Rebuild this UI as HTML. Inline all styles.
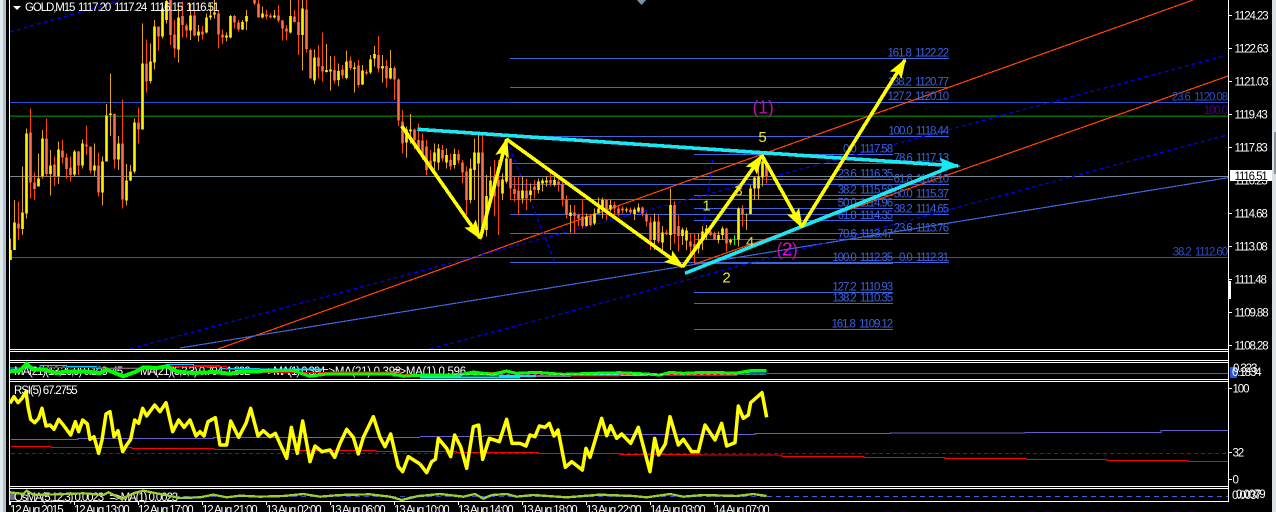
<!DOCTYPE html>
<html><head><meta charset="utf-8"><style>
html,body{margin:0;padding:0;background:#000;width:1276px;height:512px;overflow:hidden}
svg{display:block}
text{font-family:"Liberation Sans",sans-serif;font-size:11.5px;letter-spacing:-1.1px;fill:#fff;white-space:pre}
.f{fill:#3a60dc;text-anchor:end}
.g{fill:#2a4cc8;text-anchor:end}
.e{font-size:15px;letter-spacing:0;fill:#ecec40;text-anchor:middle}
</style></head><body>
<svg width="1276" height="512" viewBox="0 0 1276 512" xmlns="http://www.w3.org/2000/svg">
<defs>
<path id="yw" d="M31 715V780M43 600V750M67 500V705M79 385V655M115 460V560M127 390V535M151 450V587M175 425V552M223 450V530M247 418V505M283 430V530M307 470V617M319 312V485M331 220V408M355 408V510M379 492V617M391 495V543M403 355V520M427 70V388M451 130V250M463 60V208M487 10V115M499 0V70M535 10V188M571 10V120M595 75V125M619 40V100M631 10V60M643 0V55M679 98V125M691 45V115M727 60V90M739 30V90M787 20V55M823 30V55M871 0V100M907 0V212M943 148V252M979 132V218M991 168V272M1015 190V258M1039 152V238M1063 188V278M1087 195V255M1111 165V222M1123 138V200M1147 165V248M1171 150V238M1219 380V472M1231 342V430"/>
<path id="yb" d="M31 750V780M43 668V750M67 637V687M79 400V640M115 535V560M127 415V528M151 497V522M175 448V528M223 454V524M247 430V497M283 496V512M307 484V578M319 346V484M331 340V345M355 430V478M379 541V602M391 515V541M403 367V515M427 190V388M451 184V243M463 79V188M487 25V110M499 3V60M535 52V148M571 46V92M595 94V107M619 52V97M631 46V52M643 38V44M679 106V112M691 48V112M727 66V88M739 48V64M787 40V52M823 46V52M871 48V98M907 25V105M943 172V242M979 210V216M991 208V214M1015 213V240M1039 184V234M1063 202V207M1087 212V254M1111 178V218M1123 162V176M1147 198V206M1171 204V236M1219 388V428M1231 388V395"/>
<path id="ow" d="M55 605V720M91 325V595M103 517V600M139 355V530M163 470V558M187 420V490M199 460V535M211 470V545M235 453V525M259 376V465M271 440V520M295 457V590M343 340V505M367 298V625M415 322V430M439 118V278M475 85V152M511 0V135M523 60V172M547 5V112M559 70V112M583 30V110M607 78V118M655 30V145M667 88V132M703 45V85M715 60V95M775 0V53M763 0V15M799 30V58M811 40V55M835 15V68M847 60V122M859 75V122M883 30V68M895 0V165M919 0V158M931 145V235M955 135V235M967 98V245M1003 168V250M1027 195V235M1051 170V210M1075 180V262M1099 208V225M1135 108V218M1159 180V262M1183 200V300M1195 235V378M1207 330V460M1243 385V448M1255 370V455"/>
<path id="ob" d="M55 670V685M91 397V548M103 547V567M139 415V522M163 493V528M187 452V473M199 472V507M211 502V525M235 454V497M259 433V440M271 440V512M295 497V578M343 342V478M367 430V598M415 367V388M439 190V245M475 80V110M511 0V105M523 103V145M547 48V75M559 76V92M583 46V107M607 94V103M655 40V103M667 103V112M703 48V68M715 68V88M775 10V52M763 0V10M799 43V49M811 46V52M835 46V62M847 62V86M859 85V95M883 50V66M895 66V105M919 28V147M931 150V235M955 172V200M967 198V215M1003 210V242M1027 208V227M1051 182V204M1075 197V255M1099 216V220M1135 165V206M1159 198V236M1183 204V238M1195 238V362M1207 364V430M1243 388V420M1255 420V445"/>
<path id="yw2" d="M103 70V148M115 72V150M139 85V145M163 85V145M211 115V250M223 55V240M235 45V350M259 165V350M271 140V260M307 160V240M319 80V190M367 170V250M391 190V245M415 175V220M427 175V215M439 170V200M463 170V200M511 255V338M559 280V320M583 265V315M595 232V280M607 232V295M631 240V275M679 262V278M703 262V300M715 250V278M763 280V390M787 318V395M811 205V390M847 322V375M859 322V390M895 340V400M907 318V390M919 315V360M955 335V370M967 320V360M991 355V375M1015 262V380M1039 280V330M1051 195V280M1063 170V240M1075 140V238M1087 105V200"/>
<path id="yb2" d="M103 98V125M115 85V128M139 105V128M163 102V135M211 145V240M223 98V150M235 98V130M259 228V330M271 182V228M307 178V220M319 115V185M367 212V235M391 212V225M415 185V210M427 182V190M439 182V188M463 180V195M511 278V288M559 290V318M583 280V310M595 265V280M607 240V265M631 255V268M679 268V272M703 268V282M715 262V275M763 304V360M787 338V368M811 255V345M847 328V348M859 332V362M895 372V385M907 335V362M919 325V340M955 345V360M967 325V345M991 360V368M1015 265V358M1039 283V285M1051 205V282M1063 172V205M1075 170V205M1087 125V172"/>
<path id="ow2" d="M67 40V120M79 60V165M91 90V150M127 75V125M151 100V150M175 90V130M187 120V190M199 140V285M247 45V350M283 120V290M295 120V345M331 115V240M343 170V245M355 170V285M379 175V270M403 180V235M451 158V200M475 175V215M487 180V260M499 225V295M523 255V340M535 280V320M547 238V325M571 280V320M619 238V300M643 245V285M655 255V290M667 260V280M691 262V282M727 260V290M739 278V320M751 290V390M775 285V370M799 330V345M823 245V370M835 285V395M871 340V400M883 340V430M931 325V350M943 335V360M979 322V395M1027 255V320M1099 125V190"/>
<path id="ob2" d="M67 62V100M79 80V150M91 122V145M127 90V115M151 120V140M175 102V122M187 128V158M199 155V240M247 98V340M283 170V230M295 180V200M331 115V205M343 207V222M355 212V240M379 212V235M403 200V210M451 180V190M475 185V195M487 192V238M499 238V285M523 278V288M535 285V295M547 290V318M571 288V315M619 240V270M643 255V265M655 265V280M667 265V272M691 268V278M727 262V280M739 282V305M751 308V360M775 304V365M799 338V342M823 255V342M835 318V348M871 365V380M883 372V395M931 335V345M943 340V358M979 325V370M1027 265V285M1099 130V170"/>
<marker id="ay" markerWidth="22" markerHeight="16" refX="18" refY="8" orient="auto" markerUnits="userSpaceOnUse"><path d="M0 1L20 8L0 15L4 8Z" fill="#ffff00"/></marker>
<marker id="ac" markerWidth="24" markerHeight="16" refX="19" refY="8" orient="auto" markerUnits="userSpaceOnUse"><path d="M0 1L22 8L0 15L4 8Z" fill="#19e8f4"/></marker>
</defs>

<rect width="1276" height="512" fill="#000"/>
<rect x="0" y="0" width="3" height="512" fill="#dfe8ec"/>
<rect x="3" y="0" width="3" height="512" fill="#b4c0c8"/>
<rect x="1272" y="0" width="4" height="512" fill="#d8e0e4"/>
<rect x="1274" y="132" width="2" height="42" fill="#8a949a"/>
<path d="M637 0H646L641.5 5Z" fill="#7d93a8"/>

<g shape-rendering="crispEdges" fill="none">
<path d="M10 102.5H1228M10 257.5H1228" stroke="#2a4fd6"/>
<path d="M10 115.5H1228" stroke="#4b0082"/>
<path d="M10 116.5H1228" stroke="#006400"/>
<path d="M10 176.5H1228" stroke="#778899"/>
<path d="M510 58.5H949M510 87.5H949M510 102.5H949M510 136.5H949M510 163.5H949M510 184.5H949M510 199.5H949M510 214.5H949M510 233.5H949M510 262.5H949" stroke="#3d63dd"/>
<path d="M694 154.5H893M694 179.5H893M694 195.5H893M694 208.5H893M694 220.5H893M694 239.5H893M694 262.5H893M694 263.5H893M694 292.5H893M694 303.5H893M694 329.5H893" stroke="#3d63dd"/>
<path d="M218 349L1193 0M695 264L1228 76" stroke="#ff4500" stroke-width="1.2"/>
<path d="M180 348L1228 177.7" stroke="#3d63dd" stroke-width="1.2"/>
<path d="M10 32L120 1M130 349L1225 55.7M430 349L1227 135M506.7 140L555 263M701.7 240L713 157" stroke="#0000ff" stroke-width="1.2" stroke-dasharray="4 3"/>

<g transform="translate(.17 0) scale(.33333)">
<use href="#yw" stroke="#e0a818" stroke-width="3"/>
<use href="#ow" stroke="#ff4500" stroke-width="3"/>
<use href="#yb" stroke="#e8b818" stroke-width="9"/>
<use href="#yb" stroke="#fff000" stroke-width="3.2"/>
<use href="#ob" stroke="#ff4500" stroke-width="9"/>
<use href="#ob" stroke="#ff7048" stroke-width="3.2"/>
</g>
<g transform="translate(400.17 120) scale(.33333)">
<use href="#yw2" stroke="#e0a818" stroke-width="3"/>
<use href="#ow2" stroke="#ff4500" stroke-width="3"/>
<use href="#yb2" stroke="#e8b818" stroke-width="9"/>
<use href="#yb2" stroke="#fff000" stroke-width="3.2"/>
<use href="#ob2" stroke="#ff4500" stroke-width="9"/>
<use href="#ob2" stroke="#ff7048" stroke-width="3.2"/>
<path d="M1003 345V375" stroke="#22ee22" stroke-width="3"/>
</g>

<path d="M9 349.5H1229M9 351.5H1229M9 360.5H1229M9 362.5H1229M9 379.5H1229M9 381.5H1229M9 486.5H1229M9 488.5H1229M9 501.5H1229" stroke="#fff"/>
<path d="M9.5 0V505M1228.5 0V502" stroke="#fff"/>
<path d="M1229 15.5h3M1229 48.5h3M1229 81.5h3M1229 114.5h3M1229 147.5h3M1229 213.5h3M1229 246.5h3M1229 279.5h3M1229 312.5h3M1229 345.5h3M1229 388.5h3M1229 452.5h3M1229 479.5h3M10.5 502v3M74.5 502v3M138.5 502v3M202.5 502v3M266.5 502v3M330.5 502v3M394.5 502v3M458.5 502v3M522.5 502v3M586.5 502v3M650.5 502v3M714.5 502v3" stroke="#fff"/>
<rect x="1228" y="281" width="3" height="18" fill="#fff"/>
<path d="M767 373.5H1228" stroke="#3d63dd"/>
</g>

<text x="14" y="375">MA(21)(13,26,9) 0.103 -45</text>
<text x="140" y="375">MA(21)(5,3,3) 0.704  1.892</text>
<text x="262" y="375">=&gt;MA(1) 0.394</text>
<text x="322" y="375" style="letter-spacing:-.3px">=&gt;MA(21) 0.398</text>
<text x="393" y="375" style="letter-spacing:-.3px">=&gt;MA(1) 0.596</text>

<g shape-rendering="crispEdges" fill="none">
<g transform="translate(0 358) scale(.33333)">
<path d="M30 30H120V22H200V25H290V32H420V28H500V20H580V24H660V32H780" stroke="#00c8ff" stroke-width="3"/>
<path d="M120 28H300V30H500V25H680V35H780" stroke="#ff0000" stroke-width="3"/>
<polyline points="30,40 60,38 80,18 100,35 130,35 170,45 200,40 250,40 300,45 320,35 370,55 410,40 430,28 470,30 500,25 530,40 580,45 640,42 690,47 730,40 780,40" stroke="#00ff00" stroke-width="12"/>
</g>
<g transform="translate(260 358) scale(.33333)">
<path d="M0 34H180V46H400V52H600V58H780" stroke="#00e8ff" stroke-width="6"/>
<path d="M0 44H210V42H420V50H640V52H780" stroke="#ff0000" stroke-width="3"/>
<polyline points="0,40 60,38 100,38 150,55 200,48 400,48 430,55 470,52 500,55 600,50 640,42 700,50 740,40 780,48" stroke="#00ff00" stroke-width="9"/>
</g>
<g transform="translate(420 340) scale(.33333)">
<path d="M0 112H240V108H450V105H680V103H950V100H1040" stroke="#00e8ff" stroke-width="6"/>
<path d="M160 98H350V108H600V103H950V100H1040" stroke="#ff0000" stroke-width="3"/>
<polyline points="0,105 50,105 100,105 160,100 180,100 220,102 260,93 290,100 350,97 430,103 520,100 600,98 680,102 720,105 750,97 790,100 850,97 950,99 990,92 1040,92" stroke="#00ff00" stroke-width="9"/>
<path d="M100 103H1040" stroke="#e8e8e8" stroke-width="2" stroke-dasharray="10 10"/>
</g>
</g>

<g shape-rendering="crispEdges" fill="none">
<path d="M11 453.5H1226" stroke="#800080" stroke-dasharray="4 3"/>
<g transform="translate(0 340) scale(.33333)">
<path d="M33 298H234V295H640V292H1260" stroke="#6a5acd" stroke-width="3"/>
<path d="M33 319H153V322H396V325H642V328H885V331H1128V335H1260" stroke="#f00" stroke-width="3"/>
</g>
<g transform="translate(420 340) scale(.33333)">
<path d="M0 289H190V286H600V283H1005V281H1260" stroke="#6a5acd" stroke-width="3"/>
<path d="M0 335H110V338H355V340H600V343H843V345H1086V349H1260" stroke="#f00" stroke-width="3"/>
</g>
<path d="M840 433.5H890V433H1025V432.5H1161V430.5H1228" stroke="#6a5acd"/>
<path d="M840 456.5H864V457.5H945V458.5H1026V459.5H1107V460.5H1188V461.5H1228" stroke="#f00"/>
</g>
<g fill="none">
<g transform="translate(0 340) scale(.33333)">
<polyline stroke="#ffff00" stroke-width="10.5" stroke-linejoin="round" points="30,190 42,170 54,188 66,175 78,155 84,200 92,238 104,248 116,235 126,205 138,258 150,255 162,268 176,238 190,255 212,285 226,245 236,275 248,240 262,252 270,298 282,290 296,340 306,300 318,222 330,215 342,290 354,272 368,335 380,315 392,298 404,240 416,250 428,205 440,228 464,195 480,215 498,188 518,275 536,240 552,262 570,240 588,288 600,275 612,288 624,245 646,233 660,315 680,315 692,243 716,292 738,250 752,205 774,288 790,272 810,290 826,280 860,355 874,262 892,340 908,243 930,365 945,318 966,335 990,330 1004,352 1020,310 1040,268 1060,292 1075,342 1090,292 1120,230 1140,292 1155,320 1172,282 1195,380 1208,395 1225,350 1260,372"/>
</g>
<g transform="translate(420 340) scale(.33333)">
<polyline stroke="#ffff00" stroke-width="10.5" stroke-linejoin="round" points="0,372 20,398 35,365 46,358 55,295 80,325 92,350 104,285 122,320 140,385 160,260 176,255 188,358 208,295 238,305 260,238 276,310 300,310 318,318 330,285 345,290 358,258 375,262 388,250 402,288 414,270 436,382 455,365 487,390 498,325 510,352 545,235 560,287 572,257 590,295 605,282 632,310 655,262 690,395 704,295 716,345 736,312 750,230 775,315 790,298 815,335 835,335 855,255 885,300 905,250 920,318 945,308 955,198 970,235 985,225 992,188 1026,158 1040,232"/>
</g>
</g>

<rect x="10" y="492" width="5" height="8" fill="#667080"/>
<text x="14" y="501">OsMA(5,12,3) 0.0023   =&gt;MA(1) 0.0023</text>
<g shape-rendering="crispEdges" fill="none">
<path d="M767 496.5H1228" stroke="#3d63dd" stroke-dasharray="5 4"/>
<path d="M175 496.5H767" stroke="#2a4fd6" stroke-dasharray="5 4"/>
<g transform="translate(0 484) scale(.33333)">
<polyline stroke="#9acd32" stroke-width="7" points="30,25 70,30 80,20 100,32 140,32 200,30 250,28 310,33 325,25 365,45 400,28 430,20 480,30 540,42 600,40 640,32 680,40 720,35 780,38"/>
</g>
<g transform="translate(0 340) scale(.33333)">
<polyline stroke="#9acd32" stroke-width="7" points="780,470 850,468 910,462 960,470 1020,465 1110,463 1170,470 1205,480 1260,467"/>
</g>
<g transform="translate(420 340) scale(.33333)">
<polyline stroke="#9acd32" stroke-width="7" points="0,468 60,462 130,470 165,462 190,476 215,465 260,462 290,470 340,465 440,472 540,464 640,468 680,472 750,462 790,470 850,465 950,468 1000,462 1040,468"/>
</g>
</g>

<text class="f" x="948" y="56.5">161.8  1122.22</text>
<text class="f" x="948" y="85.5">138.2  1120.77</text>
<text class="f" x="948" y="100">127.2  1120.10</text>
<text class="f" x="948" y="134.5">100.0  1118.44</text>
<text class="f" x="948" y="161.5">78.6  1117.13</text>
<text class="f" x="948" y="182.5">61.8  1116.10</text>
<text class="f" x="948" y="197.5">50.0  1115.37</text>
<text class="f" x="948" y="212.5">38.2  1114.65</text>
<text class="f" x="948" y="231.5">23.6  1113.76</text>
<text class="f" x="948" y="261">0.0  1112.31</text>
<text class="f" x="892" y="152.5">0.0  1117.58</text>
<text class="f" x="892" y="177.5">23.6  1116.35</text>
<text class="f" x="892" y="193.5">38.2  1115.58</text>
<text class="f" x="892" y="206.5">50.0  1114.96</text>
<text class="f" x="892" y="219">61.8  1114.35</text>
<text class="f" x="892" y="237.5">70.6  1113.47</text>
<text class="f" x="892" y="261">100.0  1112.35</text>
<text class="f" x="892" y="290.5">127.2  1110.93</text>
<text class="f" x="892" y="301.5">138.2  1110.35</text>
<text class="f" x="892" y="327.5">161.8  1109.12</text>
<text class="g" x="1227" y="100.5">23.6  1120.08</text>
<text class="g" x="1227" y="255.5">38.2  1112.60</text>
<text class="g" x="1227" y="114" style="fill:#4b0082">100.0</text>

<g shape-rendering="crispEdges" fill="none" stroke-width="3.6">
<path d="M417.3 129.3L958 166" stroke="#19e8f4" marker-end="url(#ac)"/>
<path d="M685 273.3L948 168" stroke="#19e8f4"/>
<path d="M401.7 126L480.3 238.3" stroke="#ffff00" marker-end="url(#ay)"/>
<path d="M480.3 238.3L506.7 139.3" stroke="#ffff00" marker-end="url(#ay)"/>
<path d="M506.7 139.3L682.7 266.7" stroke="#ffff00" marker-end="url(#ay)"/>
<path d="M682.7 266.7L761.7 156" stroke="#ffff00" marker-end="url(#ay)"/>
<path d="M761.7 155L801.7 226.7" stroke="#ffff00" marker-end="url(#ay)"/>
<path d="M801.7 226.7L905 60" stroke="#ffff00" marker-end="url(#ay)"/>
</g>

<text x="763" y="113.5" style="font-size:18px;letter-spacing:-.3px;fill:#b812a8;text-anchor:middle">(1)</text>
<text x="787" y="255.5" style="font-size:18px;letter-spacing:-.3px;fill:#b812a8;text-anchor:middle">(<tspan style="fill:#ff00cc">2</tspan>)</text>
<text class="e" x="762.5" y="142">5</text>
<text class="e" x="726.5" y="282.5">2</text>
<text class="e" x="706.5" y="210.5" style="fill:#d0e840">1</text>
<text class="e" x="738.5" y="195.5" style="fill:#e0d040">3</text>
<text class="e" x="750" y="247" style="fill:#e0d040">4</text>

<path d="M13 6H21L17 10Z" fill="#fff"/>
<text x="25" y="11">GOLD,M15</text>
<text x="78" y="11">1117.20</text>
<text x="114" y="11">1117.24</text>
<text x="150" y="11">1116.15</text>
<text x="186" y="11">1116.51</text>
<text x="14" y="394">RSI(5) 67.2755</text>

<text x="1234.5" y="19.5">1124.23</text>
<text x="1234.5" y="52.5">1122.63</text>
<text x="1234.5" y="85.5">1121.03</text>
<text x="1234.5" y="118.5">1119.43</text>
<text x="1234.5" y="151.5">1117.83</text>
<text x="1234.5" y="184.5">1116.23</text>
<text x="1234.5" y="217.5">1114.68</text>
<text x="1234.5" y="250.5">1113.08</text>
<text x="1234.5" y="283.5">1111.48</text>
<text x="1234.5" y="316.5">1109.88</text>
<text x="1234.5" y="349.5">1108.28</text>
<rect x="1230" y="170" width="42" height="11" fill="#fff"/>
<text x="1234.5" y="180" style="fill:#000">1116.51</text>
<rect x="1230" y="367" width="7" height="11" fill="#2a55d8"/>
<text x="1232" y="376">0.1834</text>
<text x="1233" y="372">0.323</text>
<text x="1232.5" y="392.5">100</text>
<text x="1232.5" y="456.5">32</text>
<text x="1232.5" y="483.5">0</text>
<text x="1232" y="499">0.0037</text>
<text x="1236" y="498">0.0079</text>

<text x="10" y="513.5">12 Aug 2015</text>
<text x="74" y="513.5">12 Aug 13:00</text>
<text x="138" y="513.5">12 Aug 17:00</text>
<text x="202" y="513.5">12 Aug 21:00</text>
<text x="266" y="513.5">13 Aug 02:00</text>
<text x="330" y="513.5">13 Aug 06:00</text>
<text x="394" y="513.5">13 Aug 10:00</text>
<text x="458" y="513.5">13 Aug 14:00</text>
<text x="522" y="513.5">13 Aug 18:00</text>
<text x="586" y="513.5">13 Aug 22:00</text>
<text x="650" y="513.5">14 Aug 03:00</text>
<text x="714" y="513.5">14 Aug 07:00</text>
</svg>
</body></html>
